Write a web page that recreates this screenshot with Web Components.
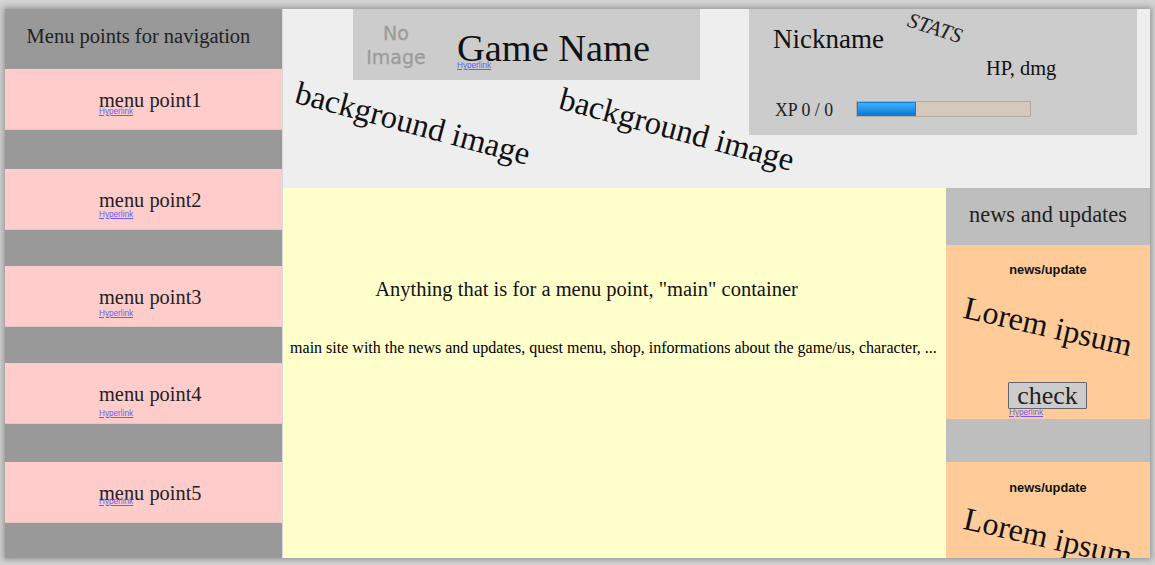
<!DOCTYPE html>
<html>
<head>
<meta charset="utf-8">
<style>
html, body { margin: 0; height: 100%; }
body { background: #d4d4d4; font-family: "Liberation Serif", serif; color: #000; overflow: hidden; }
</style>
</head>
<body>
<game-page>
    <side-nav slot="nav" heading="Menu points for navigation">
        <menu-point label="menu point1" style="--link:-8px"></menu-point>
        <menu-point label="menu point2" style="margin-top:39px;--link:-5px"></menu-point>
        <menu-point label="menu point3" style="margin-top:36px;--link:-3px"></menu-point>
        <menu-point label="menu point4" style="margin-top:36px;--link:0px"></menu-point>
        <menu-point label="menu point5" style="margin-top:38px;--link:-11px"></menu-point>
    </side-nav>
    <top-header slot="header"></top-header>
    <main-box slot="main"></main-box>
    <news-panel slot="news">
        <news-card></news-card>
        <news-card second></news-card>
    </news-panel>
</game-page>

<script>
class GamePage extends HTMLElement {
    constructor(){
        super()
        this.attachShadow({mode: "open"})
        this.shadowRoot.innerHTML = `
        <style>
        :host {
            display: block;
            height: 565px;
            padding: 9px 5px 7px;
            box-sizing: border-box;
        }
        .frame {
            height: 549px;
            display: grid;
            grid-template-columns: 278px 1fr;
            grid-template-rows: 179px 1fr;
            box-shadow: 0 0 6px 2px #999;
            background: #eee;
            overflow: hidden;
        }
        .nav { grid-row: 1 / 3; }
        .bottom { display: grid; grid-template-columns: 663px 204px; min-height: 0; }
        </style>
        <div class="frame">
            <div class="nav"><slot name="nav"></slot></div>
            <div><slot name="header"></slot></div>
            <div class="bottom">
                <slot name="main"></slot>
                <slot name="news"></slot>
            </div>
        </div>
        `
    }
}

class HyperLink extends HTMLElement {
    constructor(){
        super()
        this.attachShadow({mode: "open"})
        this.shadowRoot.innerHTML = `
        <style>
        :host { display: block; line-height: 9px; }
        a {
            font: 8.2px "Liberation Sans", sans-serif;
            color: #6a5cff;
            text-decoration: underline;
        }
        </style>
        <a href="#">Hyperlink</a>
        `
    }
}

class SideNav extends HTMLElement {
    constructor(){
        super()
        this.attachShadow({mode: "open"})
        this.shadowRoot.innerHTML = `
        <style>
        :host {
            display: block;
            height: 549px;
            background: #999;
            border-right: 1px solid #d8d8d8;
            box-sizing: border-box;
        }
        h2 {
            margin: 0;
            height: 60px;
            padding-right: 10px;
            box-sizing: border-box;
            font-size: 20.5px;
            font-weight: normal;
            line-height: 54px;
            text-align: center;
            color: #222;
        }
        </style>
        <h2></h2>
        <slot></slot>
        `
        this.shadowRoot.querySelector("h2").textContent = this.getAttribute("heading")
    }
}

class MenuPoint extends HTMLElement {
    constructor(){
        super()
        this.attachShadow({mode: "open"})
        this.shadowRoot.innerHTML = `
        <style>
        :host {
            display: block;
            height: 61px;
            background: #fcc;
            border-bottom: 1px solid #e6c4c4;
            box-sizing: border-box;
            padding: 20px 0 0 94px;
            color: #222;
        }
        .txt { font-size: 20.4px; line-height: 23px; }
        hyper-link { margin-top: var(--link, -5px); }
        </style>
        <div class="txt"></div>
        <hyper-link></hyper-link>
        `
        this.shadowRoot.querySelector(".txt").textContent = this.getAttribute("label")
    }
}

class GameTitle extends HTMLElement {
    constructor(){
        super()
        this.attachShadow({mode: "open"})
        this.shadowRoot.innerHTML = `
        <style>
        :host {
            display: flex;
            width: 347px;
            height: 71px;
            background: #ccc;
            box-sizing: border-box;
        }
        .noimg {
            width: 72px;
            margin: 12px 0 0 7px;
            font: 19px/24px "DejaVu Sans", sans-serif;
            color: #9c9c9c;
            -webkit-text-stroke: .3px #9c9c9c;
            text-align: center;
            flex: none;
        }
        .name { margin: 19px 0 0 25px; }
        h1 {
            margin: 0;
            font-size: 38.4px;
            font-weight: normal;
            line-height: 40px;
            white-space: nowrap;
            color: #111;
        }
        hyper-link { margin-top: -10px; }
        </style>
        <div class="noimg">No<br>Image</div>
        <div class="name">
            <h1>Game Name</h1>
            <hyper-link></hyper-link>
        </div>
        `
    }
}

class XpBar extends HTMLElement {
    constructor(){
        super()
        this.attachShadow({mode: "open"})
        this.shadowRoot.innerHTML = `
        <style>
        :host {
            display: block;
            width: 175px;
            height: 16px;
            background: #d4c9bb;
            border: 1px solid #b5aa9c;
            box-sizing: border-box;
        }
        .fill {
            width: 59px;
            height: 14px;
            box-sizing: border-box;
            border: 1px solid #0d7fe0;
            background: linear-gradient(#45aef5, #2d9cef 40%, #0a78d8);
        }
        </style>
        <div class="fill"></div>
        `
    }
}

class PlayerStats extends HTMLElement {
    constructor(){
        super()
        this.attachShadow({mode: "open"})
        this.shadowRoot.innerHTML = `
        <style>
        :host {
            display: block;
            position: relative;
            width: 388px;
            height: 126px;
            background: #ccc;
            box-sizing: border-box;
            padding: 15px 0 0 24px;
            color: #111;
        }
        .nick { font-size: 27px; line-height: 31px; }
        .hp { font-size: 20.4px; line-height: 23px; margin: 2px 0 0 213px; }
        .xp { display: flex; align-items: center; gap: 23px; margin: 20px 0 0 2px; font-size: 17.8px; line-height: 21px; color: #222; }
        .xp span { width: 58px; white-space: nowrap; }
        xp-bar { margin-top: -4px; }
        .stats {
            position: absolute;
            left: 158px;
            top: 8px;
            font-size: 21.3px;
            font-style: italic;
            line-height: 23px;
            transform: rotate(18deg);
            color: #222;
        }
        </style>
        <div class="nick">Nickname</div>
        <div class="stats">STATS</div>
        <div class="hp">HP, dmg</div>
        <div class="xp"><span>XP 0 / 0</span><xp-bar></xp-bar></div>
        `
    }
}

class TopHeader extends HTMLElement {
    constructor(){
        super()
        this.attachShadow({mode: "open"})
        this.shadowRoot.innerHTML = `
        <style>
        :host {
            display: flex;
            position: relative;
            height: 179px;
            background: #eee;
            box-sizing: border-box;
            padding-left: 70px;
            gap: 49px;
            align-items: flex-start;
        }
        .bg {
            position: absolute;
            font-size: 32.6px;
            line-height: 37px;
            white-space: nowrap;
            transform: rotate(15deg);
            transform-origin: center;
            color: #111;
        }
        .a { left: 9px; top: 96px; }
        .b { left: 273px; top: 102px; }
        </style>
        <game-title></game-title>
        <player-stats></player-stats>
        <div class="bg a">background image</div>
        <div class="bg b">background image</div>
        `
    }
}

class MainBox extends HTMLElement {
    constructor(){
        super()
        this.attachShadow({mode: "open"})
        this.shadowRoot.innerHTML = `
        <style>
        :host {
            display: block;
            height: 370px;
            background: #ffc;
            box-sizing: border-box;
            padding: 90px 2px 0 0;
            text-align: center;
        }
        h3 { margin: 0 0 0 -54px; font-size: 20.5px; font-weight: normal; line-height: 23px; color: #111; }
        p { margin: 38px 0 0; font-size: 16px; line-height: 18px; white-space: nowrap; }
        </style>
        <h3>Anything that is for a menu point, "main" container</h3>
        <p>main site with the news and updates, quest menu, shop, informations about the game/us, character, ...</p>
        `
    }
}

class NewsPanel extends HTMLElement {
    constructor(){
        super()
        this.attachShadow({mode: "open"})
        this.shadowRoot.innerHTML = `
        <style>
        :host {
            display: block;
            height: 370px;
            overflow: hidden;
            background: #bebebe;
        }
        h3 {
            margin: 0;
            height: 57px;
            font-size: 22.4px;
            font-weight: normal;
            line-height: 54px;
            text-align: center;
            color: #222;
        }
        </style>
        <h3>news and updates</h3>
        <slot></slot>
        `
    }
}

class NewsCard extends HTMLElement {
    constructor(){
        super()
        this.attachShadow({mode: "open"})
        this.shadowRoot.innerHTML = `
        <style>
        :host {
            display: block;
            height: 174px;
            background: #fc9;
            text-align: center;
            box-sizing: border-box;
            padding-top: 18px;
        }
        :host([second]) { margin-top: 43px; padding-top: 19px; }
        h4 { margin: 0; font: bold 12.8px/14px "Liberation Sans", sans-serif; color: #111; }
        .lorem {
            margin: 29px 0 35px;
            height: 41px;
            font-size: 32px;
            line-height: 41px;
            white-space: nowrap;
            transform: rotate(13deg);
            color: #111;
        }
        :host([second]) .lorem { margin-top: 22px; }
        button {
            display: block;
            width: 79px;
            height: 27px;
            margin: 0 0 0 62px;
            padding: 0;
            font: 26px/24px "Liberation Serif", serif;
            color: #222;
            background: #ccc;
            border: 1px solid #666;
            border-radius: 1px;
        }
        hyper-link { text-align: left; margin: -4px 0 0 63px; }
        </style>
        <h4>news/update</h4>
        <div class="lorem">Lorem ipsum</div>
        <button>check</button>
        <hyper-link></hyper-link>
        `
    }
}

customElements.define("hyper-link", HyperLink)
customElements.define("menu-point", MenuPoint)
customElements.define("side-nav", SideNav)
customElements.define("game-title", GameTitle)
customElements.define("xp-bar", XpBar)
customElements.define("player-stats", PlayerStats)
customElements.define("top-header", TopHeader)
customElements.define("main-box", MainBox)
customElements.define("news-card", NewsCard)
customElements.define("news-panel", NewsPanel)
customElements.define("game-page", GamePage)
</script>
</body>
</html>
